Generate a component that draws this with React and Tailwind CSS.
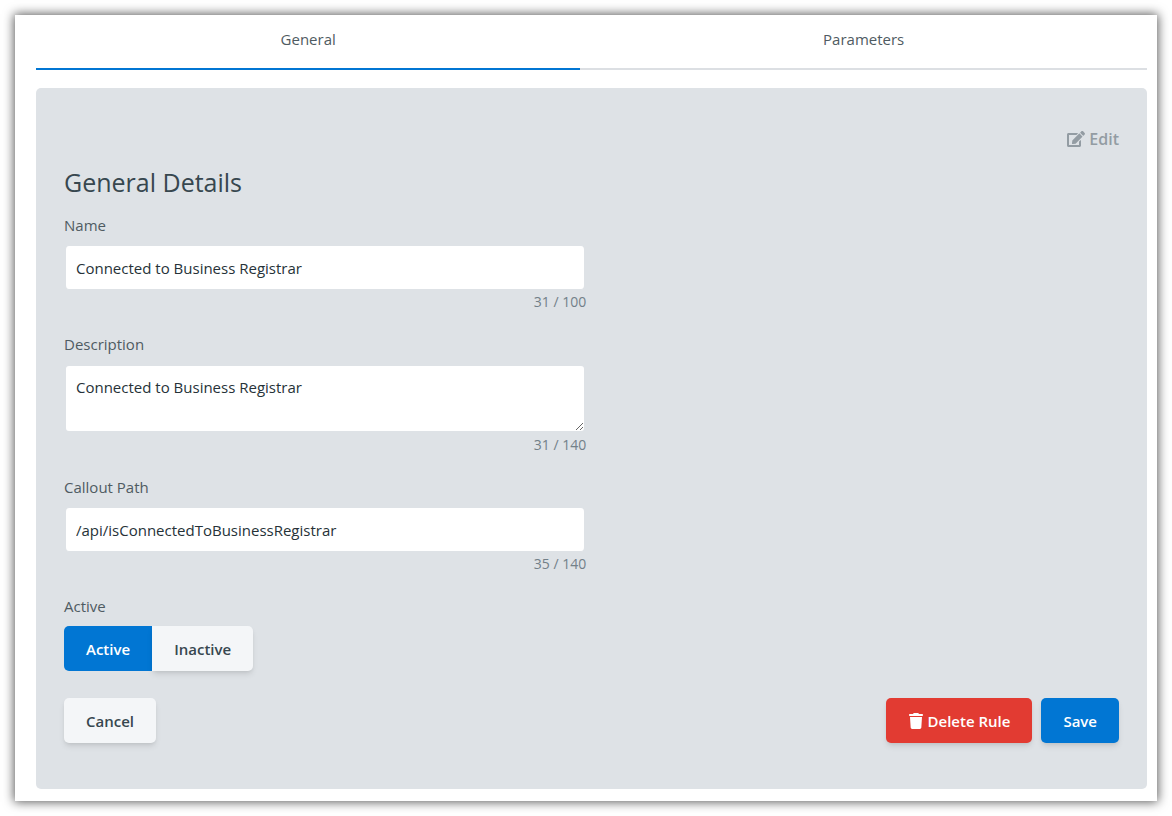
import { useState } from "react";
import { FaEdit } from "react-icons/fa";
import { FaTrash } from "react-icons/fa6";

const inputClass =
  "mt-2 block w-full rounded-[5px] border-x-2 border-[#dee2e6] bg-white px-[10px] text-[15px] leading-6 text-[#263238] focus:outline-none";

function Field({ id, label, count, children }) {
  return (
    <div className="mb-[18px]">
      <label htmlFor={id} className="block leading-6 text-[#4f5b62]">
        {label}
      </label>
      {children}
      <div className="text-right text-sm leading-6 text-[#738089]">{count}</div>
    </div>
  );
}

function Tab({ active, onClick, children }) {
  return (
    <button
      type="button"
      role="tab"
      aria-selected={active}
      onClick={onClick}
      className={
        "border-b-2 pt-3 pb-[17px] text-[15px] leading-6 text-[#4f5b62] " +
        (active ? "border-[#0176d3]" : "border-[#dcdfe3]")
      }
    >
      {children}
    </button>
  );
}

const buttonClass = "h-[45px] px-[22px] text-[15px] font-semibold leading-6";

export default function App() {
  const [tab, setTab] = useState("general");
  const [active, setActive] = useState(true);

  return (
    <div className="min-h-screen bg-white p-[15px] font-['Open_Sans','Noto_Sans',sans-serif] text-[15px]">
      <main className="bg-white pt-0 pr-[10px] pb-3 pl-[21px] shadow-[0_0_10px_1px_rgba(0,0,0,0.65)]">
        <div role="tablist" className="grid grid-cols-[49fr_51fr]">
          <Tab active={tab === "general"} onClick={() => setTab("general")}>General</Tab>
          <Tab active={tab === "parameters"} onClick={() => setTab("parameters")}>Parameters</Tab>
        </div>

        <form
          onSubmit={(e) => e.preventDefault()}
          className="mt-[18px] rounded-[5px] bg-[#dee2e6] px-7 pt-[39px] pb-[46px]"
        >
          <div className="flex justify-end">
            <button
              type="button"
              disabled
              className="flex items-center gap-1 text-base font-semibold leading-6 text-[#939ca3]"
            >
              <FaEdit className="size-[18px]" />
              Edit
            </button>
          </div>

          <h1 className="mt-[10px] mb-[10px] text-[25px] leading-[42px] text-[#37474f]">General Details</h1>

          <div className="w-[49.5%]">
            <Field id="name" label="Name" count="31 / 100">
              <input id="name" defaultValue="Connected to Business Registrar" className={inputClass + " h-[45px] border-y"} />
            </Field>
            <Field id="description" label="Description" count="31 / 140">
              <textarea
                id="description"
                defaultValue="Connected to Business Registrar"
                className={inputClass + " h-[69px] resize-y border-y-2 py-[9px]"}
              />
            </Field>
            <Field id="path" label="Callout Path" count="35 / 140">
              <input id="path" defaultValue="/api/isConnectedToBusinessRegistrar" className={inputClass + " h-[45px] border-y"} />
            </Field>
          </div>

          <div role="group" aria-labelledby="active-label">
            <div id="active-label" className="leading-6 text-[#4f5b62]">Active</div>
            <div className="mt-2 flex">
              <button
                type="button"
                aria-pressed={active}
                onClick={() => setActive(true)}
                className={
                  buttonClass +
                  " rounded-l-[5px] " +
                  (active ? "bg-[#0176d3] text-white" : "bg-[#f4f6f8] text-[#37474f] shadow-md")
                }
              >
                Active
              </button>
              <button
                type="button"
                aria-pressed={!active}
                onClick={() => setActive(false)}
                className={
                  buttonClass +
                  " rounded-r-[5px] " +
                  (active ? "bg-[#f4f6f8] text-[#37474f] shadow-md" : "bg-[#0176d3] text-white")
                }
              >
                Inactive
              </button>
            </div>
          </div>

          <div className="mt-[27px] flex items-center gap-[9px]">
            <button type="button" className={buttonClass + " mr-auto rounded-[5px] bg-[#f4f6f8] text-[#37474f] shadow-md"}>
              Cancel
            </button>
            <button
              type="button"
              className={buttonClass + " flex items-center gap-1 rounded-[5px] bg-[#e23b32] text-white shadow-md"}
            >
              <FaTrash className="size-4" />
              Delete Rule
            </button>
            <button type="submit" className={buttonClass + " rounded-[5px] bg-[#0176d3] text-white shadow-md"}>
              Save
            </button>
          </div>
        </form>
      </main>
    </div>
  );
}
